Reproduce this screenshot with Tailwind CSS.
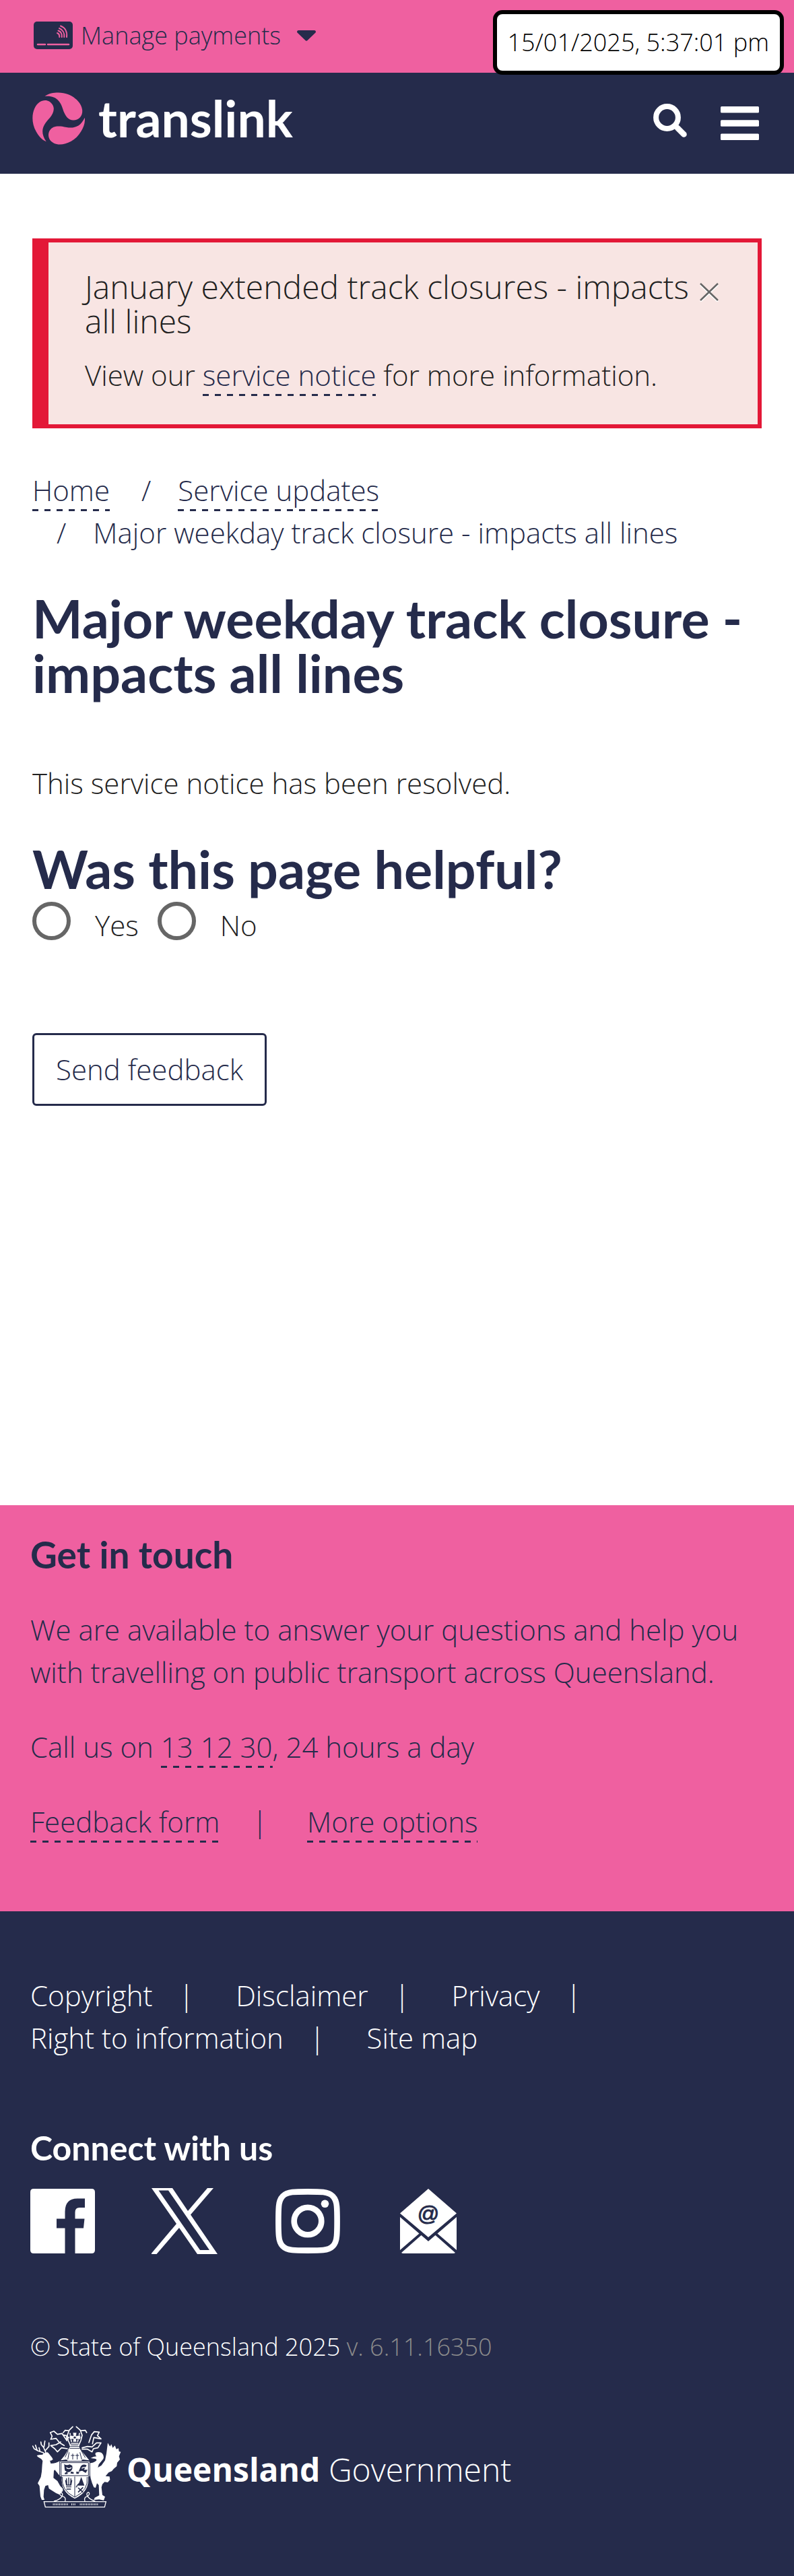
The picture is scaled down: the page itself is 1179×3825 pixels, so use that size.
<!DOCTYPE html>
<html lang="en">
<head>
<meta charset="utf-8">
<meta name="viewport" content="width=device-width, initial-scale=1">
<title>Major weekday track closure - impacts all lines | Translink</title>
<script src="https://cdn.jsdelivr.net/npm/@tailwindcss/browser@4"></script>
</head>
<body class="bg-white font-['Open_Sans',sans-serif] font-light text-[42px] leading-[63px] text-[#222]">

<!-- Current time badge -->
<time class="absolute right-[15px] top-[15px] z-10 rounded-[14px] border-[6px] border-black bg-white px-4 py-[15px] text-4xl leading-[54px] text-black" datetime="2025-01-15T17:37:01">15/01/2025, 5:37:01 pm</time>

<div class="flex h-[108px] items-center bg-[#ef60a0] px-12 pb-[3px] text-4xl leading-[54px] text-[#252b4b]">
  <button type="button" class="flex items-center gap-3">
    <svg class="h-[42px] w-[60px]" viewBox="0 0 60 42" aria-hidden="true">
      <rect x="2" y="0" width="58" height="41" rx="5" fill="#252b4b"/>
      <path d="M8 34h11M23 34h31" stroke="#ef60a0" stroke-width="2.500" stroke-linecap="round"/>
      <path d="M37 17c2.500 1 3.500 3 3.300 6M38.500 13.500c4 1.500 5.800 5 5.300 9.500M40 10c5 2 8 7 7.300 13M42 6.500c7 2.500 10 9 9 16.500" fill="none" stroke="#ef60a0" stroke-width="2" stroke-linecap="round"/>
    </svg>
    <span>Manage payments</span>
    <svg class="ml-3 h-4 w-7" viewBox="0 0 28 16" aria-hidden="true"><path d="M2 0h24q3 1 1.500 3.500L15.500 15q-1.500 1.500-3 0L.5 3.500Q-1 1 2 0z" fill="#252b4b"/></svg>
  </button>
</div>

<header class="flex h-[150px] items-center justify-between bg-[#252b4b] pl-12 pr-[52px] text-white">
  <a href="#" class="flex items-center gap-5 pb-[15px]">
    <svg class="h-[78px] w-[78px]" viewBox="47.500 136.500 78 78" aria-hidden="true" fill="#ef60a0">
      <g id="blade"><path d="M66 142.500C72 138 79 137 86 137C107 137 121 152 121.700 163C122.500 172 116 178 108.500 178C101 178 97 172 94 165C90 151 84 141 66 142.500Z"/></g>
      <use href="#blade" transform="rotate(120 86.500 175.500)"/>
      <use href="#blade" transform="rotate(240 86.500 175.500)"/>
    </svg>
    <span class="font-['Lato',sans-serif] text-[75px] font-bold leading-[81px]">translink</span>
  </a>
  <div class="flex items-center gap-[50px]">
    <button type="button" aria-label="Search" class="pb-2">
      <svg class="size-[50px]" viewBox="0 0 50 50" fill="none" stroke="#fff"><circle cx="20.500" cy="20.500" r="16.400" stroke-width="8"/><path d="M36 36l9.500 9.500" stroke-width="8.500" stroke-linecap="round"/></svg>
    </button>
    <button type="button" aria-label="Menu">
      <svg class="h-[50px] w-[57px]" viewBox="0 0 57 50" fill="#fff"><rect width="57" height="9.500" rx="1.500"/><rect y="20.300" width="57" height="9.500" rx="1.500"/><rect y="40.500" width="57" height="9.500" rx="1.500"/></svg>
    </button>
  </div>
</header>

<main class="px-12 pb-[593px] pt-24">
  <section class="border-6 border-l-24 border-[#e31837] bg-[#f8e5e3] pb-[42px] pl-[54px] pr-[58px] pt-10">
    <div class="flex items-start justify-between">
      <h2 class="text-5xl leading-[51px]">January extended track closures - impacts all lines</h2>
      <button type="button" aria-label="Close" class="shrink-0 pt-5">
        <svg class="size-7" viewBox="0 0 28 28" fill="none"><path d="M1 3l26 25M27 3L1 28" stroke="#fff" stroke-width="2.500"/><path d="M1 1l26 25M27 1L1 26" stroke="#666" stroke-width="2.500"/></svg>
      </button>
    </div>
    <p class="mt-[23px]">View our <a href="#" class="bg-[repeating-linear-gradient(90deg,#252b4b_0_9px,transparent_9px_18px)] bg-[length:100%_3px] bg-bottom bg-no-repeat pb-[3px] text-[#252b4b]">service notice</a> for more information.</p>
  </section>

  <nav aria-label="Breadcrumb" class="mt-[60px] text-[#252b4b]">
    <ol class="flex flex-wrap gap-x-[11px]">
      <li><a href="#" class="bg-[repeating-linear-gradient(90deg,#252b4b_0_9px,transparent_9px_18px)] bg-[length:100%_3px] bg-bottom bg-no-repeat pb-[3px]">Home</a></li>
      <li><span class="pl-9 pr-10">/</span><a href="#" class="bg-[repeating-linear-gradient(90deg,#252b4b_0_9px,transparent_9px_18px)] bg-[length:100%_3px] bg-bottom bg-no-repeat pb-[3px]">Service updates</a></li>
      <li><span class="pl-9 pr-10">/</span>Major weekday track closure - impacts all lines</li>
    </ol>
  </nav>

  <h1 class="mt-[55px] font-['Lato',sans-serif] text-[79px] font-bold leading-[81px] text-[#252b4b]">Major weekday track closure - impacts all lines</h1>
  <p class="mt-[92px]">This service notice has been resolved.</p>

  <form class="mt-[55px]">
    <fieldset>
      <legend class="font-['Lato',sans-serif] text-[79px] font-bold leading-[81px] text-[#252b4b]">Was this page helpful?</legend>
      <div class="mt-[9px] flex items-start gap-7">
        <div class="flex items-start gap-9"><input type="radio" id="helpful-yes" name="helpful" class="size-[57px] appearance-none rounded-full border-6 border-[#666]"><label for="helpful-yes" class="pt-[3px]">Yes</label></div>
        <div class="flex items-start gap-9"><input type="radio" id="helpful-no" name="helpful" class="size-[57px] appearance-none rounded-full border-6 border-[#666]"><label for="helpful-no" class="pt-[3px]">No</label></div>
      </div>
    </fieldset>
    <button type="button" class="mt-[129px] h-[108px] rounded-md border-3 border-[#252b4b] px-8 pb-0.5 text-[#252b4b]">Send feedback</button>
  </form>
</main>

<section class="bg-[#ef60a0] px-[45px] pb-[102px] pt-[43px] text-[#252b4b]">
  <h2 class="font-['Lato',sans-serif] text-[55px] font-bold leading-[60px]">Get in touch</h2>
  <p class="mt-[50px]">We are available to answer your questions and help you with travelling on public transport across Queensland.</p>
  <p class="mt-12">Call us on <a href="#" class="bg-[repeating-linear-gradient(90deg,#252b4b_0_9px,transparent_9px_18px)] bg-[length:100%_3px] bg-bottom bg-no-repeat pb-[3px]">13 12 30</a>, 24 hours a day</p>
  <ul class="mt-12 flex flex-wrap">
    <li><a href="#" class="bg-[repeating-linear-gradient(90deg,#252b4b_0_9px,transparent_9px_18px)] bg-[length:100%_3px] bg-bottom bg-no-repeat pb-[3px]">Feedback form</a><span class="pl-12 pr-[59px]">|</span></li>
    <li><a href="#" class="bg-[repeating-linear-gradient(90deg,#252b4b_0_9px,transparent_9px_18px)] bg-[length:100%_3px] bg-bottom bg-no-repeat pb-[3px]">More options</a></li>
  </ul>
</section>

<footer class="bg-[#252b4b] px-[45px] pb-[101px] pt-[93px] text-white">
  <ul class="flex max-w-[1000px] flex-wrap gap-x-[62px]">
    <li><a href="#">Copyright</a><span class="pl-[39px]">|</span></li>
    <li><a href="#">Disclaimer</a><span class="pl-[39px]">|</span></li>
    <li><a href="#">Privacy</a><span class="pl-[39px]">|</span></li>
    <li><a href="#">Right to information</a><span class="pl-[39px]">|</span></li>
    <li><a href="#">Site map</a></li>
  </ul>

  <h2 class="mt-[105px] font-['Lato',sans-serif] text-[50px] font-bold leading-[54px]">Connect with us</h2>
  <div class="mt-[33px] flex items-center">
    <a href="#" aria-label="Facebook" class="mr-[84px]">
      <svg class="size-24" viewBox="0 0 96 96" fill="#fff"><path d="M5 0H91Q96 0 96 5V91Q96 96 91 96H66.500V58.500H79L80.500 44.500H66.500V35Q66.500 28 73 28H81V14.500H70Q51.500 14.500 51.500 34V44.500H39V58.500H51.500V96H5Q0 96 0 91V5Q0 0 5 0Z"/></svg>
    </a>
    <a href="#" aria-label="X" class="mr-[86px]">
      <svg class="h-[98px] w-[98px]" viewBox="0 0 98 98" fill="#fff"><path fill-rule="evenodd" d="M0 0H31L54 34L83 0H92L58 39.500L98 98H68L41 59L7.500 98H-1L37 53ZM10.500 3.500L72 92H86L25 3.500Z"/></svg>
    </a>
    <a href="#" aria-label="Instagram" class="mr-[88px]">
      <svg class="size-24" viewBox="0 0 96 96" fill="none" stroke="#fff"><path d="M48 4.400C62 4.400 66 4.500 71 5C84 6.500 90 13 91 26C91.500 32 91.600 36 91.600 48C91.600 60 91.500 64 91 70C90 83 84 90 71 91C66 91.500 62 91.600 48 91.600C34 91.600 30 91.500 25 91C12 90 6 83 5 70C4.500 64 4.400 60 4.400 48C4.400 36 4.500 32 5 26C6 13 12 6.500 25 5C30 4.500 34 4.400 48 4.400Z" stroke-width="8.600"/><circle cx="48" cy="48" r="20.300" stroke-width="8.600"/><circle cx="73.500" cy="22.300" r="5.800" fill="#fff" stroke="none"/></svg>
    </a>
    <a href="#" aria-label="Email updates">
      <svg class="h-24 w-[86px]" viewBox="0 0 86 96" fill="#fff"><path d="M43 0L85 36.500L43 72L1 36.500ZM1 42L29.500 66.500L1 91ZM85 42L56.500 66.500L85 91ZM3 95L32.500 69L43 78L53.500 69L83 95Q82 96 80 96H6Q4 96 3 95Z"/><text x="43" y="48" text-anchor="middle" font-family="Liberation Sans" font-size="32" font-weight="400" fill="#252b4b" stroke="#252b4b">@</text></svg>
    </a>
  </div>

  <p class="mt-[111px] text-4xl leading-[54px]">© State of Queensland 2025 <span class="text-[#8c8c8c]">v. 6.11.16350</span></p>

  <a href="#" class="mt-[90px] flex items-center gap-2">
    <svg class="h-[122px] w-[135px]" viewBox="45 36 405 366" role="img" aria-label="Queensland coat of arms">
      <g fill="#fff">
        <!-- stag -->
        <path d="M103 158L122 154L128 160L142 178L146 186L136 192L132 190L136 204Q160 204 176 193L181 200L176 216L182 236L186 256Q176 262 166 246L154 232L150 236L148 268L166 282L178 304L190 316V326L174 342L160 336L128 316L124 300L112 304L106 322L104 352L108 366H96L90 350L86 304L78 292L92 264L96 240L98 210L100 192L94 184L78 174L74 168L84 166L100 164Z"/>
        <!-- brolga -->
        <path d="M314 180Q326 172 340 172Q332 164 336 156Q348 150 362 156Q376 168 370 184L350 208L346 222L362 212L378 190L384 160L390 112L400 128L406 118L412 134L422 124L428 140L438 136L440 150L448 152L440 172L444 186L432 200L430 216L416 228L408 238L394 244L380 260L398 262L400 276L390 288L376 286L366 296L362 310L366 344L378 352L372 368L352 364L328 366L332 356L352 346L350 300L342 292L336 312L328 310L320 290L314 270L308 230L306 200Q318 206 338 192Q344 184 332 182Z"/>
        <!-- helmet -->
        <path d="M222 128H262L268 142L292 170L308 190L278 186L270 194H214L206 186L180 190L198 168L214 142Z"/>
      </g>
      <path d="M214 146L200 176M272 146L290 178M218 154L212 186M266 154L274 186M220 136H266" stroke="#252b4b" stroke-width="3" fill="none"/>
      <path d="M234 160V186M226 168H242M254 160V186M246 168H262" stroke="#252b4b" stroke-width="3"/>
      <!-- antlers, mantling and crest -->
      <g fill="none" stroke="#fff" stroke-width="5" stroke-linejoin="round" stroke-linecap="round">
        <path d="M104 156L80 148L62 138L56 126M76 146L68 122M88 150L84 134M114 154L104 132L94 120L92 108M106 130L110 104M114 144L128 128V112"/>
        <path d="M234 40L218 56L210 78L214 102L224 124M250 40L268 56L276 78L270 102L260 124M218 58L200 56L192 66M268 58L290 56L296 66"/>
        <path d="M134 66L150 60L166 74L186 70L208 102M134 66L142 82L136 96L160 92L176 112L196 124M208 102L206 80L190 76M352 64L330 62L318 76L306 110M352 64L344 80L360 94L328 88L322 116M136 124L154 138L166 152L184 134L210 138M136 124L160 120L180 108M360 112L340 112L320 130L300 128L276 134M360 112L346 134L326 138L320 152L300 140L276 140"/>
        <path d="M222 70L228 106M264 70L256 106M214 88H270M228 114H258M222 122H262"/>
      </g>
      <path d="M234 66H252L249 81L268 77V97L249 95L252 108H234L237 95L220 97V77L237 81Z" fill="#fff" stroke="#252b4b" stroke-width="2"/>
      <circle cx="243" cy="88" r="5" fill="#252b4b"/>
      <!-- shield -->
      <path d="M176 194H310V262H304Q312 330 243 362Q176 330 184 262H176Z" fill="#fff" stroke="#252b4b" stroke-width="3"/>
      <path d="M182 200H304V258H182ZM188 264Q180 322 243 354Q306 322 298 264M243 262V354" fill="none" stroke="#252b4b" stroke-width="3"/>
      <path d="M196 206Q206 214 220 208L232 214Q236 236 218 242Q200 244 198 230ZM296 212Q280 204 270 216L260 240L276 236L292 246L300 232L284 232Z" fill="#252b4b"/>
      <path d="M206 222Q216 232 228 222M274 226Q282 218 292 222M204 238L196 248" fill="none" stroke="#fff" stroke-width="4"/>
      <path d="M198 246L210 240L212 250L200 252ZM226 240L238 242V250L224 248ZM250 240L264 242L260 250H250Z" fill="#252b4b"/>
      <path d="M206 270L208 300M216 266V300M226 270L224 300M202 278L206 300H226L230 278M204 308H228M206 318H226" stroke="#252b4b" stroke-width="4" fill="none"/>
      <path d="M272 264L286 302H250L262 290ZM246 310L254 300V310Z" fill="#252b4b"/>
      <path d="M258 312L280 332M280 310L258 332" stroke="#252b4b" stroke-width="5"/>
      <!-- scroll -->
      <g fill="none" stroke="#fff" stroke-width="4">
        <path d="M106 374H382L376 398H112Z"/>
        <path d="M150 372Q180 366 188 346Q190 334 180 334Q170 340 186 350Q206 352 200 372M334 372Q308 364 298 346Q294 334 304 332Q314 338 300 350Q282 354 288 372"/>
        <path d="M146 386H212M228 386H248M266 386H346" stroke-width="8" stroke-dasharray="3 4"/>
      </g>
    </svg>
    <span class="pt-2 text-5xl"><span class="font-bold">Queensland</span> Government</span>
  </a>
</footer>
</body>
</html>
